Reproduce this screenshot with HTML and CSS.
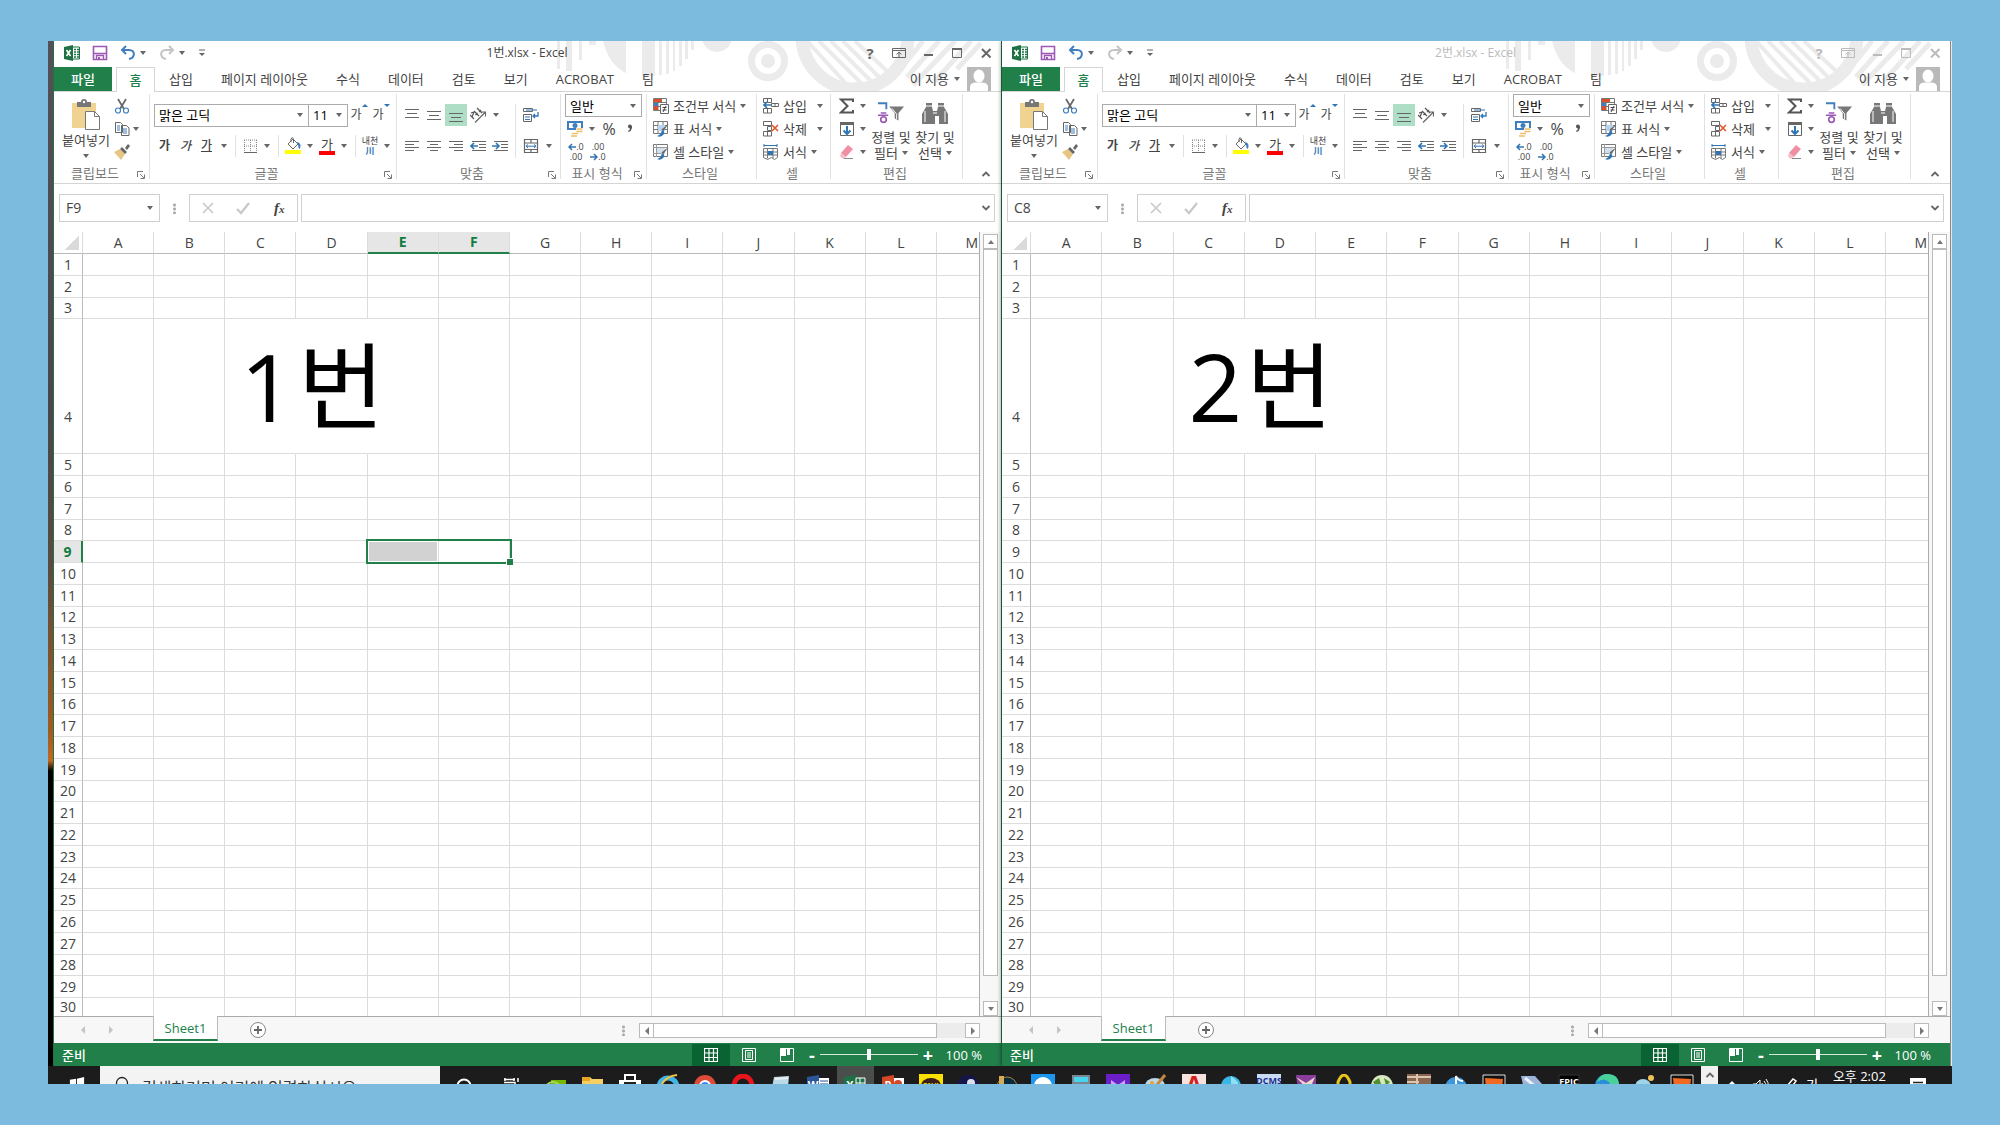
FILE: index.html
```html
<!DOCTYPE html>
<html lang="ko">
<head>
<meta charset="utf-8">
<meta name="viewport" content="width=device-width, initial-scale=1">
<title>1번.xlsx - Excel</title>
<link rel="stylesheet" href="styles.css">
</head>
<body>
<svg class="sprite" aria-hidden="true">
  <symbol id="i-excel" viewBox="0 0 16 16"><path d="M0 2 9 0v16l-9-2z" fill="#1e7145"/><path d="M9 2h6.500v12H9" fill="#fff" stroke="#1e7145"/><path d="M10 4.500h2m1 0h2M10 7h2m1 0h2M10 9.500h2m1 0h2M10 12h2m1 0h2" stroke="#1e7145" stroke-width="1.300"/><path d="M2.500 5 6.500 11M6.500 5 2.500 11" stroke="#fff" stroke-width="1.600"/></symbol>
  <symbol id="i-save" viewBox="0 0 16 16"><path d="M1.500 1.500h13v13h-13z" fill="#fff" stroke="#9b58b5" stroke-width="1.600"/><path d="M2 8.500h12M4.500 15v-4.500h7V15" stroke="#9b58b5" stroke-width="1.400" fill="none"/><path d="M6 12h2v3H6z" fill="#9b58b5"/></symbol>
  <symbol id="i-undo" viewBox="0 0 16 16"><path d="M6 1 2 5l4 4M2 5h7c7 0 6 8 0 9" fill="none" stroke="#3f7fbf" stroke-width="2"/></symbol>
  <symbol id="i-redo" viewBox="0 0 16 16"><path d="M10 1l4 4-4 4M14 5H7C0 5 1 13 7 14" fill="none" stroke="#c4c4c4" stroke-width="2"/></symbol>
  <symbol id="i-custom" viewBox="0 0 16 16"><path d="M5 5h6" stroke="#666"/><path d="M5 8h6l-3 3z" fill="#666"/></symbol>
  <symbol id="i-ribbon" viewBox="0 0 16 16"><path d="M1.500 3.500h13v9h-13zM1.500 5.500h13M8 12V7M5.500 9.500 8 7l2.500 2.500" fill="none" stroke="currentColor"/></symbol>
  <symbol id="i-min" viewBox="0 0 16 16"><path d="M4 10h9" stroke="currentColor" stroke-width="2"/></symbol>
  <symbol id="i-max" viewBox="0 0 16 16"><path d="M3.500 4h9v8.500h-9z" fill="none" stroke="currentColor"/><path d="M3 4h10" stroke="currentColor" stroke-width="2"/></symbol>
  <symbol id="i-close" viewBox="0 0 16 16"><path d="m4 4 8.500 8.500m0-8.500L4 12.500" stroke="currentColor" stroke-width="2"/></symbol>
  <symbol id="i-user" viewBox="0 0 24 24"><path d="M0 0h24v24H0z" fill="#b9b9b9"/><ellipse cx="12" cy="9" rx="5.500" ry="6.500" fill="#fff"/><path d="M3 24v-4q0-4 5-4.500h8q5 .5 5 4.500v4z" fill="#fff"/></symbol>
  <symbol id="i-paste" viewBox="0 0 30 32"><path d="M1 4h24v25H1z" fill="#f0d391"/><path d="M6 3h4q0-3 3-3t3 3h4v5H6z" fill="#777"/><circle cx="13" cy="3" r="1.200" fill="#fff"/><path d="M14.500 12.500h9l5 5v13h-14z" fill="#fff" stroke="#777"/><path d="M23.500 12.500v5h5" fill="none" stroke="#777"/></symbol>
  <symbol id="i-cut" viewBox="0 0 16 16"><path d="M4 1l6 10M12 1 6 11" stroke="#666" stroke-width="1.700"/><circle cx="4" cy="12.500" r="2.500" fill="none" stroke="#3f7fbf" stroke-width="1.200"/><circle cx="12" cy="12.500" r="2.500" fill="none" stroke="#3f7fbf" stroke-width="1.200"/></symbol>
  <symbol id="i-copy" viewBox="0 0 16 16"><path d="M1.500 1.500h5l2 2v8h-7zM7.500 4.500h5l2.500 2.500v7.500H7.500z" fill="#fff" stroke="#666"/><path d="M3 5h3M3 7h3M3 9h3M9 8h4M9 10h4M9 12h4" stroke="#3f7fbf"/></symbol>
  <symbol id="i-brush" viewBox="0 0 16 16"><path d="M0 8 6 5l5 5-4 6z" fill="#e9c584"/><path d="m6 5 2-2 5 5-2 2zM11 4l3-4 2 2-3 4z" fill="#666"/></symbol>
  <symbol id="i-border" viewBox="0 0 16 16"><path d="M2 2h13M2 8h13M2.500 2v12M8.500 2v12M14.500 2v12" stroke="#888" stroke-dasharray="1 1"/><path d="M2 14.500h13" stroke="#666"/></symbol>
  <symbol id="i-fill" viewBox="0 0 18 18"><path d="M4 7 9 2l5 5-5 5z" fill="#fff" stroke="#666"/><path d="M7 5V2q1-3 2.500 0v4" fill="none" stroke="#666"/><path d="M13 5q5 1 3 7-2-1-2-4z" fill="#3f7fbf"/><path d="M1 13h16v4H1z" fill="#ff0"/></symbol>
  <symbol id="i-top" viewBox="0 0 16 16"><path d="M1 2.500h14M3 6.500h10M1 10.500h14" stroke="#666"/></symbol>
  <symbol id="i-mid" viewBox="0 0 16 16"><path d="M1 4.500h14M3 8.500h10M1 12.500h14" stroke="#666"/></symbol>
  <symbol id="i-bot" viewBox="0 0 16 16"><path d="M1 6.500h14M3 10.500h10M1 14.500h14" stroke="#666"/></symbol>
  <symbol id="i-left" viewBox="0 0 16 16"><path d="M1 3.500h14M1 6.500h9M1 9.500h14M1 12.500h9" stroke="#666"/></symbol>
  <symbol id="i-center" viewBox="0 0 16 16"><path d="M1 3.500h14M4 6.500h8M1 9.500h14M4 12.500h8" stroke="#666"/></symbol>
  <symbol id="i-right" viewBox="0 0 16 16"><path d="M1 3.500h14M6 6.500h9M1 9.500h14M6 12.500h9" stroke="#666"/></symbol>
  <symbol id="i-outdent" viewBox="0 0 16 16"><path d="M2 3.500h14M9 6.500h7M9 9.500h7M2 12.500h14" stroke="#666"/><path d="M1 8h7M4 5 1 8l3 3" fill="none" stroke="#2f75b5" stroke-width="1.600"/></symbol>
  <symbol id="i-indent" viewBox="0 0 16 16"><path d="M2 3.500h14M9 6.500h7M9 9.500h7M2 12.500h14" stroke="#666"/><path d="M0 8h7M4 5l3 3-3 3" fill="none" stroke="#2f75b5" stroke-width="1.600"/></symbol>
  <symbol id="i-orient" viewBox="0 0 16 16"><path d="M5 15.500 15 5.500M11 5h4.500v4.500" fill="none" stroke="#666" stroke-width="1.200"/><path d="m0 8 4 4M1 6l3-1-2 5M4 4l5 5M5.500 8l2-2M7 1l5 5M9 5l2-2" fill="none" stroke="#555" stroke-width="1.200"/></symbol>
  <symbol id="i-wrap" viewBox="0 0 16 16"><path d="M.5 1.500h9v3h-9zM.5 7.500h8v7h-8z" fill="#fff" stroke="#666"/><path d="M2 10h5M2 12.500h5M3 3h11" stroke="#2f75b5"/><path d="M15 5v4h-5M12 7l-2 2 2 2" fill="none" stroke="#2f75b5" stroke-width="1.300"/></symbol>
  <symbol id="i-merge" viewBox="0 0 16 16"><path d="M1.500 1.500h13v13h-13zM1.500 5h13M1.500 11.500h13M8 1.500V5M8 11.500v3" fill="#fff" stroke="#666" stroke-width="1.200"/><path d="M3 8.200h10M5 6.500 3 8.200 5 10M11 6.500l2 1.700-2 1.800" stroke="#2f75b5" fill="none"/></symbol>
  <symbol id="i-money" viewBox="0 0 16 16"><path d="M0 0h16v9H0z" fill="#3f7fbf"/><path d="M2 2h12v5H2z" fill="#fff"/><circle cx="8" cy="4.500" r="2.500" fill="#3f7fbf"/><path d="M9 7h7v6h-4v3H3v-5h6z" fill="#fff"/><path d="M9.500 8h6M9.500 10.500h6M5 12.500h6M4 15h6" stroke="#edbf6b" stroke-width="1.600"/></symbol>
  <symbol id="i-comma" viewBox="0 0 16 16"><path d="M8.500 3.500q3 0 2.500 3.500-.5 3-3.500 4l-.5-1q2-1 2-2.500-2 0-2-2 0-1.800 1.500-2z" fill="#555"/></symbol>
  <symbol id="i-cond" viewBox="0 0 16 16"><path d="M.5.500h13v12H.5zM.5 4.500h13M.5 8.500h13M5 .5v12" fill="#fff" stroke="#777"/><path d="M1 1h8v3H1zM1 8h4v4H1z" fill="#d9502f"/><path d="M1 5h4v3H1z" fill="#3f7fbf"/><path d="M7.500 6.500h8v9h-8z" fill="#fff" stroke="#666"/><path d="M9.500 9.500h4M9.500 12h4M13 8l-3 6" stroke="#444"/></symbol>
  <symbol id="i-table" viewBox="0 0 16 16"><path d="M.5.500h14v12H.5zM.5 4.500h14M.5 8.500h14M5 .5v12M10 .5v12" fill="#fff" stroke="#777"/><path d="M5 4h7v6H5z" fill="#b8d3ec"/><path d="m15.500 3-5 7-2-1.500z" fill="#666"/><path d="M9 9q3 1 2 4-3 4-7 2 4-1 5-6z" fill="#2f75b5"/></symbol>
  <symbol id="i-style" viewBox="0 0 16 16"><path d="M.5.500h14v12H.5z" fill="#fff" stroke="#777"/><path d="M3 3h9v7H3z" fill="#cfe0f1"/><path d="M3.500 0v13M0 3.500h15M0 9.500h8" stroke="#999"/><path d="m15.500 3-5 7-2-1.500z" fill="#666"/><path d="M9 9q3 1 2 4-3 4-7 2 4-1 5-6z" fill="#2f75b5"/></symbol>
  <symbol id="i-ins" viewBox="0 0 16 16"><path d="M.5.500h8v4h-8zM4.500.500v4M.5 10.500h8v4.500h-8zM4.500 10.500V15M8.500 5.500h7v3h-7zM12 5.500v3" fill="#fff" stroke="#666"/><path d="M1 7h7M4 4 1 7l3 3" fill="none" stroke="#2f75b5" stroke-width="1.700"/></symbol>
  <symbol id="i-del" viewBox="0 0 16 16"><path d="M.5.500h8v4h-8zM4.500 5.500h4v4h-4zM.5 10.500h8v4.500h-8zM4.500 10.500V15" fill="#fff" stroke="#666"/><path d="m9 4 6 6M15 4l-6 6" stroke="#e0552b" stroke-width="1.600"/></symbol>
  <symbol id="i-fmt" viewBox="0 0 16 16"><path d="M1 1.500h13M1 0v3M14 0v3" stroke="#2f75b5"/><path d="M.5 4.500h14v9l-3 2-3-2-4 2-4-2zM.5 8h14M.5 11h14M4.500 4.500v10M10 4.500v10" fill="#fff" stroke="#777"/><path d="M5 7h5v4H5z" fill="#2f75b5"/></symbol>
  <symbol id="i-sum" viewBox="0 0 16 16"><path d="M14 4V1.500H2L8.500 8 2 14.500h12V12" fill="none" stroke="#555" stroke-width="2"/></symbol>
  <symbol id="i-down" viewBox="0 0 16 16"><path d="M1.500 1.500h13v13h-13z" fill="#fff" stroke="#666"/><path d="M1 1h14v3H1z" fill="#666"/><path d="M8 5v8M4.500 9.500 8 13l3.500-3.500" fill="none" stroke="#2f75b5" stroke-width="2"/></symbol>
  <symbol id="i-erase" viewBox="0 0 16 16"><path d="m2 9 7-8 5 4-7 8z" fill="#ef8fa4"/><path d="m2 9 5 4-2 1.500H3L1 12z" fill="#f7bcc8"/><path d="M5 14.500h9" stroke="#888"/></symbol>
  <symbol id="i-sort" viewBox="0 0 30 24"><path d="M1 1.500h9V8" fill="none" stroke="#3f7fbf" stroke-width="2"/><path d="M4 12h6M1 14.500h11" stroke="#9b58b5" stroke-width="1.600"/><circle cx="7" cy="19" r="3" fill="none" stroke="#9b58b5" stroke-width="1.800"/><path d="M13 5h16l-6 7v8l-4-2v-6z" fill="#777"/><path d="m16 7 5 6v6" fill="none" stroke="#fff"/></symbol>
  <symbol id="i-find" viewBox="0 0 28 24"><path d="M1 23V13L5 6V2h6v4l1 4h4l1-4V2h6v4l4 7v10h-9v-8h-4v8z" fill="#777"/><path d="M5 5h6M17 5h6M4 10v11M24 10v11M12 12h4" stroke="#fff"/></symbol>
  <symbol id="i-launch" viewBox="0 0 10 10"><path d="M1.500 7V1.500H7M4 4l4 4M8.500 4.500v4h-4" fill="none" stroke="#777"/></symbol>
  <symbol id="i-up" viewBox="0 0 10 10"><path d="m1.500 7 3.500-3.500L8.500 7" fill="none" stroke="#666" stroke-width="1.800"/></symbol>
  <symbol id="i-chev" viewBox="0 0 10 10"><path d="M1.500 3 5 6.500 8.500 3" fill="none" stroke="#666" stroke-width="1.800"/></symbol>
  <symbol id="i-no" viewBox="0 0 16 16"><path d="m3 3 10 10M13 3 3 13" stroke="#c8c8c8" stroke-width="1.600"/></symbol>
  <symbol id="i-yes" viewBox="0 0 16 16"><path d="m2 9 4 4 8-10" fill="none" stroke="#c8c8c8" stroke-width="2.200"/></symbol>
  <symbol id="i-plus" viewBox="0 0 16 16"><circle cx="8" cy="8" r="7.500" fill="#fff" stroke="#888"/><path d="M8 4v8M4 8h8" stroke="#666" stroke-width="1.800"/></symbol>
  <symbol id="i-normal" viewBox="0 0 14 14"><path d="M.5.500h13v13H.5zM0 5h14M0 9.500h14M5 0v14M9.500 0v14" fill="none" stroke="#fff" stroke-width="1.200"/></symbol>
  <symbol id="i-layout" viewBox="0 0 14 14"><path d="M.5.500h13v13H.5zM3.500 2.500h7v9h-7zM5 5h4M5 7h4M5 9h4" fill="none" stroke="#fff"/></symbol>
  <symbol id="i-break" viewBox="0 0 14 14"><path d="M.5.500h13v13H.5z" fill="none" stroke="#fff"/><path d="M1 1h5v7H1zM7 1h3v6H7z" fill="#fff"/></symbol>
  <symbol id="art" viewBox="0 0 460 50">
    <g fill="#ebebeb"><path d="M16 0h3v28h-3zM25 0h6v30h-6zM38 0h3v19h-3zM48 0h7v4h-7z"/><path d="M62 0h23v32q-17-8-23-32zM101 0h13v35h-13zM118 0h3v34h-3zM125 0h3v33h-3zM132 0h2v30h-2zM138 0h3v25h-3zM144 0h3v18h-3zM150 0h3v9h-3z"/><circle cx="176" cy="-4" r="15"/><circle cx="227" cy="20" r="7"/></g>
    <g fill="none" stroke="#ebebeb"><circle cx="227" cy="20" r="16.500" stroke-width="7"/><circle cx="314" cy="-5" r="53" stroke-width="13"/><path d="m266 0 44 48M278 0l44 44M290 0l40 40M302 0l36 36M314 0l32 30" stroke-width="4"/><path d="m382 0-16 20M398 0l-32 36M414 0l-42 44M430 0l-36 40M440 2l-24 26" stroke-width="5"/></g>
  </symbol>
</svg>

<main class="desktop">
  <div class="windows" id="windows"></div>
  <footer class="taskbar">
    <button class="start" aria-label="시작"><svg viewBox="0 0 18 18"><path d="M1 3l7-1v7H1zM9 2l8-2v9H9zM1 10h7v7l-7-1zM9 10h8v8l-8-1z" fill="#fff"/></svg></button>
    <label class="search"><svg viewBox="0 0 16 16"><circle cx="8" cy="7" r="5.500" fill="none" stroke="#222" stroke-width="1.300"/></svg><input type="text" placeholder="검색하려면 여기에 입력하십시오"></label>
    <button class="sys" aria-label="Cortana"><svg viewBox="0 0 16 16"><circle cx="8" cy="8" r="6.500" fill="none" stroke="#fff" stroke-width="2"/></svg></button>
    <button class="sys" aria-label="작업 보기"><svg viewBox="0 0 16 16"><path d="M0 1.500h11M0 4.500h11v9H0M1 0v3M10 0v3M14 0v4M14 6v10" fill="none" stroke="#fff" stroke-width="1.500"/></svg></button>
    <div class="apps" id="apps"></div>
    <div class="tray">
      <button class="more" aria-label="숨겨진 아이콘"><svg viewBox="0 0 10 10"><use href="#i-up"/></svg></button>
      <svg viewBox="0 0 16 16"><path d="m3 8 5-5 5 5z" fill="#fff"/></svg>
      <svg viewBox="0 0 16 16"><path d="M0 6h3l4-4v12l-4-4H0zM9 5q2 3 0 6M11 3q4 5 0 10M13 1q5 7 0 14" fill="none" stroke="#fff"/></svg>
      <svg viewBox="0 0 16 16"><path d="m3 14 2-6 6-7 3 2-5 7z" fill="none" stroke="#fff" stroke-width="1.500"/></svg>
      <span class="ime">가</span>
      <time>오후 2:02</time>
      <svg class="note" viewBox="0 0 16 16"><path d="M0 0h16v13H0z" fill="#fff"/><path d="M3 4.500h10M3 8h10" stroke="#222" stroke-width="1.500"/></svg>
    </div>
  </footer>
</main>
<script src="script.js"></script>
</body>
</html>
```
FILE: styles.css
```css
* { box-sizing: border-box; }
body {
  margin: 0;
  min-height: 100vh;
  padding: 41px 48px;
  background: #7cbade;
  color: #444;
  font: 13px/16px "Open Sans", "Noto Sans CJK KR", sans-serif;
}
button, input, select { font: inherit; color: inherit; }
button {
  display: inline-flex;
  align-items: center;
  justify-content: center;
  padding: 0;
  border: 0;
  background: none;
  white-space: nowrap;
}
input, select { min-width: 0; padding: 0; border: 0; border-radius: 0; background: none; outline: 0; appearance: none; }
svg { display: block; flex: none; width: 16px; height: 16px; }
.sprite { position: absolute; width: 0; height: 0; }

.desktop { background: linear-gradient(#555058 0, #4a464c 35%, #5a4a40 50%, #a05a20 66%, #c06a20 69%, #000 70%); overflow: hidden; }
.windows { display: grid; grid-template-columns: 1fr 1fr; padding-left: 5px; border-right: 1px solid #fff; }
.window { position: relative; min-width: 0; background: #fff; border: solid #217346; border-width: 0 1px; }
.window + .window { border-left-width: 0; border-right-color: #888; box-shadow: -1px 0 4px #0006; }
.art { position: absolute; top: 0; right: 0; width: 460px; height: 50px; }

/* title bar */
.titlebar { position: relative; display: flex; align-items: center; height: 26px; padding: 0 0 2px 10px; }
.titlebar > svg { margin-right: 12px; }
.titlebar .btn { width: 16px; }
.titlebar .btn + .arr { margin-right: 9px; }
.titlebar .save { margin-right: 12px; }
.titlebar .arr + .btn:last-of-type { margin-left: -4px; }
.titlebar h1 { flex: 1; margin: 0; padding-right: 18px; font-size: 12px; font-weight: 400; text-align: center; }
.winbtns { display: flex; gap: 13px; padding-right: 7px; color: #666; }
.winbtns b { font-size: 15px; }
.inactive h1, .inactive .winbtns { color: #bbb; }

/* ribbon tabs */
.tabs { position: relative; display: flex; height: 25px; border-bottom: 1px solid #d5d5d5; }
.tabs button { height: 24px; padding: 0 13px; }
.tabs .file { width: 58px; margin-right: 4px; background: #217f4a; color: #fff; font-weight: 500; }
.tabs .on { width: 39px; height: 25px; padding: 0; border: 1px solid #d5d5d5; border-bottom: 0; background: #fff; color: #217f4a; font-weight: 500; }
.tabs nav { display: flex; gap: 2px; padding-left: 1px; }
.tabs .user { margin-left: auto; padding: 0 7px 0 0; }
.tabs .avatar { width: 24px; height: 24px; margin-right: 10px; }

/* ribbon */
.ribbon { display: flex; height: 92px; padding: 2px 0 4px; border-bottom: 1px solid #d5d5d5; }
.group { display: flex; flex-direction: column; justify-content: space-between; border-right: 1px solid #e1e1e1; }
.group .body { display: flex; flex: 1; min-height: 0; }
.group footer { display: flex; align-items: center; height: 12px; padding-right: 3px; color: #777; }
.group footer span { flex: 1; text-align: center; }
.group footer svg { width: 10px; height: 10px; margin-top: 4px; }
.row { display: flex; align-items: center; height: 23px; }
.rows { display: flex; flex-direction: column; }
.btn { width: 20px; height: 22px; }
.arr { width: 14px; height: 20px; }
.arr::after, .drop::after, .pick::after {
  content: "";
  border: 3px solid transparent;
  border-top: 4px solid #666;
  border-bottom: 0;
}
.drop { display: inline-flex; align-items: center; gap: 5px; }
.sep { width: 1px; height: 22px; margin: 0 4px; background: #e1e1e1; }
.pick { display: flex; align-items: center; height: 23px; padding: 0 5px 0 4px; border: 1px solid #ababab; background: #fff; color: #000; }
.pick select { flex: 1; }

.g-clip { width: 96px; }
.g-clip .paste { width: 52px; height: 70px; flex-direction: column; justify-content: flex-start; margin-left: 6px; padding-top: 5px; line-height: 18px; }
.g-clip .paste svg { width: 30px; height: 32px; }
.g-clip .paste .drop { margin-top: 5px; }
.g-clip .arr { width: 8px; }
.g-font { width: 247px; padding-left: 4px; }
.g-font footer, .g-align footer, .g-num footer { margin-left: -4px; }
.g-style footer, .g-cell footer { margin-left: -6px; }
.g-font .body, .g-align .body { align-items: center; }
.g-font .rows, .g-align .rows { gap: 8px; }
.g-font .name { width: 155px; }
.g-font .size { width: 40px; margin-left: -1px; }
.g-font .btn.sm { width: 22px; font-size: 12px; }
.g-font .biu { width: 21px; font-size: 12px; font-weight: 500; }
.up::after, .dn::after { content: ""; align-self: flex-start; border: 3px solid transparent; border-bottom: 3px solid #2f75b5; border-top: 0; }
.dn::after { border-bottom: 0; border-top: 3px solid #2f75b5; }
.g-font .fill svg { width: 18px; height: 18px; }
.color { flex-direction: column; line-height: 14px; }
.color::after { content: ""; width: 16px; height: 4px; background: #f00; }
.ruby { flex-direction: column; font-size: 9px; line-height: 10px; }
.ruby em { color: #2f75b5; font-style: normal; font-weight: 700; }
.g-align { width: 164px; padding-left: 4px; }
.g-align .btn { width: 22px; }
.g-align .btn.active { background: #aedec5; }
.g-align .sep { height: 54px; }
.g-num { width: 86px; padding-left: 4px; }
.g-num .pick { width: 77px; }
.g-num .pct { width: 20px; font-size: 16px; }
.dec { width: 22px; flex-direction: column; font-size: 9px; line-height: 10px; }
.dec span { display: flex; }
.dec svg { width: 8px; height: 10px; }
.g-style { width: 110px; padding-left: 6px; }
.g-cell { width: 74px; padding-left: 6px; }
.g-style .drop, .g-cell .drop { height: 23px; gap: 4px; }
.g-cell .wide::after { margin-left: 6px; }
.g-edit { width: 132px; }
.g-edit .rows { width: 38px; padding-left: 6px; }
.g-edit .arr { width: 12px; }
.big { width: 44px; height: 70px; flex-direction: column; justify-content: flex-start; padding-top: 7px; line-height: 16px; }
.big svg { width: 28px; height: 24px; margin-bottom: 4px; }
.big .drop { gap: 4px; }
.collapse { margin: auto 9px 0 auto; width: 12px; height: 10px; }
.collapse svg { width: 10px; height: 10px; }

/* formula bar */
.formula { display: flex; height: 48px; padding: 10px 6px 10px 5px; }
.box { display: flex; align-items: center; border: 1px solid #d0d0d0; background: #fff; }
.formula .cellname { width: 101px; padding: 0 6px; font-size: 14px; }
.cellname input { flex: 1; }
.dots { width: 3px; height: 11px; margin: 9px 13px; background: radial-gradient(circle, #aaa 1px, transparent 2px) 0 0 / 3px 4px; }
.formula .fx { width: 109px; margin-right: 3px; justify-content: space-around; }
.fx i { font: italic 700 15px "Liberation Serif", serif; }
.fx small { font-size: 11px; }
.formula .entry { flex: 1; padding-right: 3px; }
.entry input { flex: 1; }
.entry svg { width: 10px; height: 10px; }

/* sheet */
.sheet { display: flex; border-bottom: 1px solid #ababab; }
.grid { flex: 1; width: 100%; min-width: 0; table-layout: fixed; border-collapse: separate; border-spacing: 0; border-right: 1px solid #ababab; font-size: 14px; line-height: 16px; }
.grid .c-head { width: 29px; }
.grid .c-last { width: 42px; }
.grid tr { height: 22px; }
.grid .r21 { height: 21px; }
.grid .tall { height: 135px; }
.grid .cut { height: 18px; }
.grid th, .grid td { padding: 0; border: solid #dcdcdc; border-width: 0 1px 1px 0; font-weight: 400; }
.grid thead th { border-bottom-color: #bbb; }
.grid thead th:last-child { padding-right: 1px; text-align: right; border-right: 0; }
.grid tbody th { border-right-color: #bbb; }
.grid tr > :last-child { border-right: 0; }
.grid .tall th { vertical-align: bottom; padding-bottom: 28px; }
.grid .cut > * { border-bottom: 0; line-height: 16px; }
.grid .corner { background: linear-gradient(135deg, transparent 50%, #dadada 50%) 11px 4px / 14px 14px no-repeat; }
.grid th.hot { background: #e6e6e6; color: #107c41; font-weight: 700; }
.grid thead th.hot { border-bottom: 2px solid #217f4a; }
.grid tbody th.hot { border-right: 2px solid #217f4a; }
.grid .title { padding-left: 15px; color: #000; font-size: 94px; line-height: 94px; white-space: nowrap; }
.title div { display: flex; gap: 4px; height: 118px; align-items: center; }
.grid .sel { position: relative; background: #d2d2d2; background-clip: padding-box; box-shadow: inset 0 0 0 1px #fff; }
.sel span { position: absolute; z-index: 1; top: -2px; left: -2px; width: calc(200% + 6px); height: 25px; border: 2px solid #217f4a; }
.sel span::after { content: ""; position: absolute; right: -3px; bottom: -3px; width: 6px; height: 6px; border: solid #fff; border-width: 1px 0 0 1px; background: #217f4a; }
.vscroll { display: flex; flex-direction: column; width: 21px; padding: 2px 3px 0; background: #f7f7f7; }
.vscroll button, .hscroll button { width: 15px; height: 15px; border: 1px solid #bbb; background: #fff; }
.vscroll .thumb { height: auto; flex: 1; margin-bottom: 25px; }
.tri::before { content: ""; border: 3px solid transparent; border-bottom: 4px solid #777; border-top: 0; }
.tri.down::before { border-bottom: 0; border-top: 4px solid #777; }
.tri.left::before { border: 4px solid transparent; border-right-color: #777; border-left: 0; }
.tri.right::before { border: 4px solid transparent; border-left-color: #777; border-right: 0; }

/* sheet tabs */
.sheets { display: flex; height: 26px; padding-right: 21px; background: #f7f7f7; }
.sheets .nav { width: 28px; opacity: .4; }
.sheets .nav:first-child { margin-left: 15px; }
.sheets .tab { width: 65px; height: 25px; margin: -1px 32px 0 28px; border: solid #bbb; border-width: 0 1px; border-bottom: 2px solid #217f4a; background: #fff; color: #217f4a; }
.hscroll { display: flex; align-items: center; width: 341px; height: 15px; margin-top: 6px; background: #ececec; }
.sheets .dots { margin: 8px 14px 0 auto; }
.hscroll .thumb { width: 284px; margin-right: auto; margin-left: -1px; }

/* status bar */
.status { display: flex; align-items: center; height: 23px; padding: 0 19px 0 8px; background: #217f4a; color: #fff; font-weight: 500; }
.status > span:first-child { flex: 1; }
.status .view { width: 38px; height: 22px; }
.status .view svg { width: 14px; height: 14px; }
.status .view.on { background: #0a6332; }
.status .step { width: 14px; margin: 0 1px; font-size: 18px; font-weight: 700; }
.status .minus { width: 10px; }
.status input { width: 98px; height: 14px; background: linear-gradient(#d5e8dc, #d5e8dc) center / 100% 1px no-repeat; }
.status input::-webkit-slider-thumb { appearance: none; width: 4px; height: 11px; background: #fff; }
.status output { width: 46px; text-align: right; }

/* taskbar, cut off by the bottom edge of the desktop */
.taskbar { position: relative; display: flex; align-items: flex-start; height: 18px; overflow: hidden; background: #1c1c1c; color: #fff; }
.taskbar .start { width: 52px; padding: 11px 0 0 6px; }
.search { display: flex; align-items: flex-start; width: 340px; height: 44px; padding: 10px 14px; gap: 12px; background: #f3f3f3; }
.search input { flex: 1; color: #222; font-size: 16px; line-height: 24px; }
.search input::placeholder { color: #333; opacity: 1; }
.taskbar .sys { width: 48px; padding-top: 12px; }
.apps { display: flex; flex: 1; }
.apps span { display: flex; flex: 1; justify-content: center; height: 44px; padding-top: 8px; }
.apps .open { background: #4a4f4c; }
.apps svg { width: 24px; height: 24px; }
.tray { display: flex; align-items: flex-start; width: 251px; }
.tray > svg { margin: 12px 7px 0 6px; }
.tray .more { width: 17px; height: 40px; padding-top: 4px; align-items: flex-start; background: #f0f0f0; }
.more svg { width: 10px; height: 10px; }
.ime { margin: 10px 14px 0 1px; font-size: 14px; line-height: 18px; }
.tray time { flex: 1; line-height: 20px; white-space: nowrap; }
.tray .note { margin: 12px 26px 0 6px; }
```
FILE: script.js
```js
const icon = name => `<svg aria-hidden="true"><use href="#i-${name}"/></svg>`;
const btn = (name, label, cls = '') => `<button class="btn ${cls}" aria-label="${label}">${icon(name)}</button>`;
const arrow = '<button class="arr" aria-label="옵션"></button>';
const sep = '<div class="sep"></div>';
const foot = (name, launch) => `<footer><span>${name}</span>${launch ? icon('launch') : ''}</footer>`;
const drop = (name, text, cls = '') => `<button class="drop ${cls}">${name ? icon(name) : ''}${text}</button>`;
const tinyArrow = d => `<svg viewBox="0 0 8 10" aria-hidden="true"><path d="${d}" fill="none" stroke="#2f75b5" stroke-width="1.500"/></svg>`;

const ribbon = () => `
<div class="ribbon">
  <section class="group g-clip"><div class="body">
    <button class="paste">${icon('paste')}<span>붙여넣기</span><span class="drop"></span></button>
    <div class="rows">
      <div class="row">${btn('cut', '잘라내기')}</div>
      <div class="row">${btn('copy', '복사')}${arrow}</div>
      <div class="row">${btn('brush', '서식 복사')}</div>
    </div></div>${foot('클립보드', true)}</section>
  <section class="group g-font"><div class="body"><div class="rows">
      <div class="row">
        <label class="pick name"><select aria-label="글꼴"><option>맑은 고딕</option></select></label>
        <label class="pick size"><select aria-label="글꼴 크기"><option>11</option></select></label>
        <button class="btn sm up">가</button><button class="btn sm dn">가</button>
      </div>
      <div class="row">
        <button class="biu"><b>가</b></button><button class="biu"><i>가</i></button><button class="biu"><u>가</u></button>${arrow}${sep}
        ${btn('border', '테두리')}${arrow}${sep}
        ${btn('fill', '채우기 색', 'fill')}${arrow}<button class="btn color">가</button>${arrow}${sep}
        <button class="btn ruby"><span>내천</span><em>川</em></button>${arrow}
      </div></div></div>${foot('글꼴', true)}</section>
  <section class="group g-align"><div class="body">
    <div class="rows">
      <div class="row">${btn('top', '위쪽 맞춤')}${btn('mid', '가운데 맞춤')}${btn('bot', '아래쪽 맞춤', 'active')}${btn('orient', '방향')}${arrow}</div>
      <div class="row">${btn('left', '왼쪽 맞춤')}${btn('center', '가운데')}${btn('right', '오른쪽 맞춤')}${btn('outdent', '내어쓰기')}${btn('indent', '들여쓰기')}</div>
    </div>${sep}
    <div class="rows"><div class="row">${btn('wrap', '텍스트 줄 바꿈')}</div><div class="row">${btn('merge', '병합')}${arrow}</div></div>
  </div>${foot('맞춤', true)}</section>
  <section class="group g-num"><div class="body"><div class="rows">
    <label class="pick"><select aria-label="표시 형식"><option>일반</option></select></label>
    <div class="row">${btn('money', '회계 형식')}${arrow}<button class="btn pct">%</button>${btn('comma', '쉼표 스타일')}</div>
    <div class="row"><button class="dec"><span>${tinyArrow('M8 5H1M4 2 1 5l3 3')}.0</span><span>.00</span></button><button class="dec"><span>.00</span><span>${tinyArrow('M0 5h7M4 2l3 3-3 3')}.0</span></button></div>
  </div></div>${foot('표시 형식', true)}</section>
  <section class="group g-style"><div class="rows">
    <div class="row">${drop('cond', '조건부 서식')}</div><div class="row">${drop('table', '표 서식')}</div><div class="row">${drop('style', '셀 스타일')}</div>
  </div>${foot('스타일')}</section>
  <section class="group g-cell"><div class="rows">
    <div class="row">${drop('ins', '삽입', 'wide')}</div><div class="row">${drop('del', '삭제', 'wide')}</div><div class="row">${drop('fmt', '서식')}</div>
  </div>${foot('셀')}</section>
  <section class="group g-edit"><div class="body">
    <div class="rows"><div class="row">${btn('sum', '합계')}${arrow}</div><div class="row">${btn('down', '채우기')}${arrow}</div><div class="row">${btn('erase', '지우기')}${arrow}</div></div>
    <button class="big">${icon('sort')}<span>정렬 및</span><span class="drop">필터</span></button>
    <button class="big">${icon('find')}<span>찾기 및</span><span class="drop">선택</span></button>
  </div>${foot('편집')}</section>
  <button class="collapse" aria-label="리본 메뉴 축소">${icon('up')}</button>
</div>`;

const columns = 'ABCDEFGHIJKLM'.split('');

function grid(win) {
  const hotCol = c => win.selected && (c === 'E' || c === 'F') ? ' class="hot"' : '';
  let rows = '';
  for (let r = 1; r <= 30; r++) {
    let cls = r === 3 || (r > 4 && r < 30 && r % 4 === 0) ? 'r21' : '';
    if (r === 4) cls = 'tall';
    if (r === 30) cls = 'cut';
    const cells = columns.map(c => {
      if (r === 4 && c === 'C') return `<td class="title" colspan="3"><div><span>${win.number}</span><span>번</span></div></td>`;
      if (r === 4 && (c === 'D' || c === 'E')) return '';
      if (win.selected && r === 9 && c === 'E') return '<td class="sel"><span></span></td>';
      return '<td></td>';
    }).join('');
    rows += `<tr class="${cls}"><th${win.selected && r === 9 ? ' class="hot"' : ''}>${r}</th>${cells}</tr>`;
  }
  return `<table class="grid"><colgroup><col class="c-head">${'<col>'.repeat(12)}<col class="c-last"></colgroup>
  <thead><tr><th class="corner"></th>${columns.map(c => `<th${hotCol(c)}>${c}</th>`).join('')}</tr></thead><tbody>${rows}</tbody></table>`;
}

const excelWindow = win => `
<article class="window ${win.selected ? '' : 'inactive'}">
  <svg class="art" aria-hidden="true"><use href="#art"/></svg>
  <header class="titlebar">
    ${icon('excel')}${btn('save', '저장', 'save')}${btn('undo', '실행 취소')}${arrow}${btn('redo', '다시 실행')}${arrow}${btn('custom', '사용자 지정')}
    <h1>${win.number}번.xlsx - Excel</h1>
    <div class="winbtns"><button class="btn"><b>?</b></button>${btn('ribbon', '리본 표시')}${btn('min', '최소화')}${btn('max', '최대화')}${btn('close', '닫기')}</div>
  </header>
  <div class="tabs">
    <button class="file">파일</button><button class="on">홈</button>
    <nav>${['삽입', '페이지 레이아웃', '수식', '데이터', '검토', '보기', 'ACROBAT', '팀'].map(t => `<button>${t}</button>`).join('')}</nav>
    <button class="user drop">이 지용</button><svg class="avatar"><use href="#i-user"/></svg>
  </div>
  ${ribbon()}
  <div class="formula">
    <label class="box cellname"><input type="text" aria-label="이름 상자" value="${win.cell}"><span class="drop"></span></label>
    <div class="dots"></div>
    <div class="box fx">${btn('no', '취소')}${btn('yes', '입력')}<button class="btn" aria-label="함수 삽입"><i>f<small>x</small></i></button></div>
    <label class="box entry"><input type="text" aria-label="수식 입력줄">${icon('chev')}</label>
  </div>
  <div class="sheet">${grid(win)}
    <div class="vscroll"><button class="tri" aria-label="위로"></button><button class="thumb" aria-label="세로 스크롤"></button><button class="tri down" aria-label="아래로"></button></div>
  </div>
  <div class="sheets">
    <button class="nav tri left" aria-label="이전 시트"></button><button class="nav tri right" aria-label="다음 시트"></button>
    <button class="tab">Sheet1</button><button aria-label="새 시트">${icon('plus')}</button>
    <div class="dots"></div>
    <div class="hscroll"><button class="tri left" aria-label="왼쪽"></button><button class="thumb" aria-label="가로 스크롤"></button><button class="tri right" aria-label="오른쪽"></button></div>
  </div>
  <div class="status"><span>준비</span>
    <button class="view on" aria-label="기본">${icon('normal')}</button><button class="view" aria-label="페이지 레이아웃">${icon('layout')}</button><button class="view" aria-label="페이지 나누기">${icon('break')}</button>
    <button class="step minus">-</button><input type="range" aria-label="확대/축소" value="50"><button class="step">+</button><output>100 %</output>
  </div>
</article>`;

document.getElementById('windows').innerHTML = [
  { number: 1, cell: 'F9', selected: true },
  { number: 2, cell: 'C8', selected: false }
].map(excelWindow).join('');

const label = (x, y, size, fill, text) => `<text x="${x}" y="${y}" font-size="${size}" font-weight="700" fill="${fill}" text-anchor="middle">${text}</text>`;
const orangeApp = '<path d="M1 1h22v23H1z" fill="#111" stroke="#ddd"/><path d="m3 4 18 1-2 19H5z" fill="#f26a21"/>';
const apps = [
  '<path d="M8 6h15v18H8z" fill="#76b900"/><path d="M1 14q9-12 18 0" fill="none" stroke="#a6d65a" stroke-width="2"/>',
  '<path d="M2 3h8l2 2h11v19H2z" fill="#f7ce62"/><path d="M2 3h8v4H2z" fill="#e5a823"/>',
  '<path d="M1 6h22v18H1z" fill="#fff"/><path d="M7 7V1h10v6" fill="none" stroke="#fff" stroke-width="2"/><path d="M6 9h12" stroke="#222" stroke-width="2"/>',
  '<circle cx="12" cy="13" r="9" fill="none" stroke="#43b4e8" stroke-width="5"/><path d="M3 16Q8 2 21 1" fill="none" stroke="#f5c637" stroke-width="2"/>',
  '<circle cx="12" cy="12" r="11" fill="#dd4b39"/><path d="M1 12l7 0 4 10z" fill="#1b9e4b"/><circle cx="12" cy="12" r="5" fill="#4285f4" stroke="#fff" stroke-width="2"/>',
  '<ellipse cx="12" cy="12" rx="9" ry="10" fill="none" stroke="#e8151c" stroke-width="5"/>',
  '<path d="m6 3 15-1-2 22H2z" fill="#b9dbe6"/><path d="m7 5 13-1" stroke="#eee" stroke-width="2"/>',
  '<path d="M1 3 13 1v23H1z" fill="#2b579a"/><path d="M13 4h10v20H13z" fill="#fff"/><path d="M14 7h8M14 10h8" stroke="#2b579a"/>' + label(7, 15, 11, '#fff', 'W'),
  '<path d="M1 3 13 1v23H1z" fill="#1e7145"/><path d="M13 4h9v20h-9z" fill="#1e7145" stroke="#fff"/><path d="M17 4v20M13 9h9" stroke="#fff"/>' + label(7, 15, 11, '#fff', 'X'),
  '<path d="M1 3 13 1v23H1z" fill="#d24726"/><path d="M13 4h10v20H13z" fill="#fff"/><circle cx="17" cy="10" r="4" fill="#d24726"/>' + label(7, 15, 11, '#fff', 'P'),
  '<path d="M0 0h24v24H0z" fill="#fae100"/><ellipse cx="12" cy="12" rx="10" ry="8" fill="#3b1e1e"/>' + label(12, 13, 6, '#fae100', 'TALK'),
  '<circle cx="12" cy="12" r="11" fill="#14164a"/><circle cx="15" cy="9" r="4" fill="#dde"/>',
  '<circle cx="13" cy="13" r="10" fill="#0b2a3c" stroke="#a58640"/><path d="M5 2h5v20H5z" fill="#d5ab55"/>',
  '<path d="M0 0h24v24H0z" fill="#1d96f0"/><circle cx="12" cy="12" r="9" fill="#fff"/>',
  '<path d="M3 1h18v23H3z" fill="#7b8790"/><path d="M5 3h14v5H5z" fill="#48d4ee"/><path d="M5 11h14" stroke="#ddd" stroke-dasharray="3 2"/>',
  '<path d="M0 0h24v24H0z" fill="#6b1fc9"/><path d="m5 6 7 5 7-5v9H5z" fill="#c9a5f5"/>',
  '<ellipse cx="11" cy="12" rx="10" ry="8" fill="#b9d7e8"/><circle cx="8" cy="9" r="2" fill="#f0a030"/><path d="m12 12 9-11" stroke="#c8873f" stroke-width="3"/>',
  '<path d="M0 0h24v24H0z" fill="#f7e3dc"/>' + label(12, 19, 23, '#d22020', 'A'),
  '<circle cx="12" cy="12" r="10" fill="#38b6e6"/><path d="M12 2v20q16-9 0-20z" fill="#8fe0f5"/>',
  '<path d="M0 0h24v24H0z" fill="#c9dcf3"/>' + label(12, 10, 9, '#1d2f8d', 'DCMS'),
  '<path d="M2 1h20v23H5z" fill="#8a3d9c"/><path d="m2 3 10 6 9-6-6 14z" fill="#ead9c5"/>',
  '<path d="M6 14V8q6-14 12 0v6" fill="none" stroke="#e7c51c" stroke-width="3"/>',
  '<circle cx="12" cy="12" r="11" fill="#d8e8c0"/><path d="m3 8 6-4 2 6-4 4zM14 4l6 4-4 4z" fill="#4f8f2f"/>',
  '<path d="M0 0h24v24H0z" fill="#8a6650"/><path d="M0 3h24M0 8h12M10 0v24" stroke="#d9c5b2" stroke-width="2"/>',
  '<circle cx="11" cy="14" r="11" fill="#3e96dc"/><path d="M11 14V2q2 5 7 5" fill="none" stroke="#fff" stroke-width="2"/>',
  orangeApp,
  '<path d="M1 2h14l7 8-4 14H6z" fill="#9bb4d8"/><path d="m5 4 12 10" stroke="#eef" stroke-width="3"/>',
  '<path d="M2 1h20v23H2z" fill="#000" stroke="#333"/>' + label(12, 11, 9, '#fff', 'EPIC'),
  '<circle cx="12" cy="12" r="12" fill="#2a8fd8"/><path d="M12 0q12 0 12 11-8 4-10-3-5-5-12 0Q5 0 12 0z" fill="#49d19a"/>',
  '<circle cx="10" cy="13" r="8" fill="#9fd4e8"/><circle cx="18" cy="4" r="3" fill="#efc35a"/>',
  orangeApp
];
document.getElementById('apps').innerHTML = apps
  .map((art, i) => `<span${i === 8 ? ' class="open"' : ''}><svg viewBox="0 0 24 24">${art}</svg></span>`)
  .join('');
```
